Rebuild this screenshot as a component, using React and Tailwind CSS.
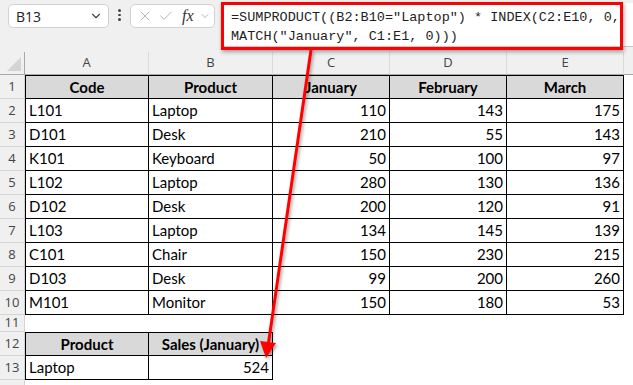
import { ChevronDown, X, Check } from 'lucide-react';

// widths of the sheet columns A..E
const colW = ['w-[124px]', 'w-[124px]', 'w-[117px]', 'w-[117px]', 'w-[117px]'];

const data = [
  ['L101', 'Laptop', 110, 143, 175],
  ['D101', 'Desk', 210, 55, 143],
  ['K101', 'Keyboard', 50, 100, 97],
  ['L102', 'Laptop', 280, 130, 136],
  ['D102', 'Desk', 200, 120, 91],
  ['L103', 'Laptop', 134, 145, 139],
  ['C101', 'Chair', 150, 230, 215],
  ['D103', 'Desk', 99, 200, 260],
  ['M101', 'Monitor', 150, 180, 53],
];

/**
 * One sheet row: row number + cells + empty white rest
 */
function Row({ num, h = 'h-[24px]', children }) {
  return (
    <div className={`flex ${h}`}>
      <div className="w-[25px] shrink-0 bg-[#f0f0f0] border-r border-b border-[#d4d4d4] flex items-center justify-center text-[13px] text-[#444] font-['Open_Sans',sans-serif]">
        {num}
      </div>
      {children}
      <div className="flex-1 bg-white" />
    </div>
  );
}

function Cell({ w, first, top, head, right, children }) {
  return (
    <div
      className={`${w} shrink-0 flex items-center border-r border-b border-black px-[3px] text-[15px] text-black overflow-hidden whitespace-nowrap
        ${first ? 'border-l' : ''} ${top ? 'border-t' : ''}
        ${head ? 'bg-[#d9d9d9] font-bold justify-center' : 'bg-white'}
        ${right ? 'justify-end' : ''}`}
    >
      {children}
    </div>
  );
}

export default function App() {
  return (
    <div className="relative w-[633px] h-[385px] overflow-hidden bg-[#f0f0f0] font-['Lato',sans-serif]">
      {/* Barre de formule */}
      <div className="h-[52px] flex items-start pl-[8px] pt-[3px]">
        <div className="mt-[1px] w-[101px] h-[24px] rounded-[5px] border border-[#d2d2d2] bg-white flex items-center justify-between pl-[7px] pr-[5px] font-['Open_Sans',sans-serif] text-[14px] text-[#222]">
          <span>B13</span>
          <ChevronDown className="w-[14px] h-[14px] text-[#444]" strokeWidth={2} />
        </div>
        <div className="mt-[6px] w-[21px] flex flex-col items-center gap-[2px]">
          <span className="w-[2.5px] h-[2.5px] rounded-full bg-[#444]" />
          <span className="w-[2.5px] h-[2.5px] rounded-full bg-[#444]" />
          <span className="w-[2.5px] h-[2.5px] rounded-full bg-[#444]" />
        </div>
        <div className="mt-[1px] w-[85px] h-[24px] rounded-[5px] border border-[#d2d2d2] bg-white flex items-center pl-[6px] gap-[5px]">
          <X className="w-[16px] h-[16px] text-[#b5b5b5]" strokeWidth={1.5} />
          <Check className="w-[16px] h-[16px] text-[#b5b5b5]" strokeWidth={1.5} />
          <span className="ml-[3px] font-['Liberation_Serif',serif] italic text-[16px] text-[#333] leading-none">fx</span>
          <ChevronDown className="w-[12px] h-[12px] text-[#999]" strokeWidth={1.5} />
        </div>
        <div className="relative ml-[6px] flex-1 h-[44px] bg-white border-b border-[#c6c6c6]">
          <div className="pl-[10px] pt-[5px] font-['Liberation_Mono',monospace] text-[13.5px] leading-[19px] text-[#1e1e1e] whitespace-pre">
            <div>=SUMPRODUCT((B2:B10="Laptop") * INDEX(C2:E10, 0,</div>
            <div>MATCH("January", C1:E1, 0)))</div>
          </div>
          <div className="absolute left-0 top-[-1px] right-[10px] bottom-[-4px] border-[3px] border-[#ff0000] shadow-[1px_2px_4px_rgba(0,0,0,0.35)]" />
        </div>
      </div>

      {/* En-têtes de colonnes */}
      <div className="flex h-[23px]">
        <div className="w-[25px] shrink-0 border-r border-b border-[#a8a8a8] flex items-end justify-end pr-[3px] pb-[3px]">
          <svg width="14" height="14" viewBox="0 0 14 14">
            <polygon points="14,0 14,14 0,14" fill="#d4d4d4" />
          </svg>
        </div>
        {['A', 'B', 'C', 'D', 'E'].map((l, i) => (
          <div
            key={l}
            className={`${colW[i]} shrink-0 border-r border-[#dadada] border-b border-b-[#a8a8a8] flex items-center justify-center text-[13px] text-[#444] font-['Open_Sans',sans-serif]`}
          >
            {l}
          </div>
        ))}
        <div className="flex-1 border-b border-[#a8a8a8]" />
      </div>

      {/* Tableau principal */}
      <Row num={1}>
        {['Code', 'Product', 'January', 'February', 'March'].map((t, i) => (
          <Cell key={t} w={colW[i]} first={i === 0} top head>
            {t}
          </Cell>
        ))}
      </Row>
      {data.map((r, ri) => (
        <Row key={ri} num={ri + 2}>
          {r.map((v, i) => (
            <Cell key={i} w={colW[i]} first={i === 0} right={i > 1}>
              {v}
            </Cell>
          ))}
        </Row>
      ))}
      <Row num={11} h="h-[17px]" />
      <Row num={12}>
        <Cell w={colW[0]} first top head>Product</Cell>
        <Cell w={colW[1]} top head>Sales (January)</Cell>
      </Row>
      <Row num={13}>
        <Cell w={colW[0]} first>Laptop</Cell>
        <Cell w={colW[1]} right>524</Cell>
      </Row>
      <Row />

      {/* Flèche d'annotation */}
      <svg className="absolute inset-0 pointer-events-none" width="633" height="385">
        <defs>
          <filter id="sh" x="-50%" y="-10%" width="200%" height="120%">
            <feDropShadow dx="1.5" dy="2" stdDeviation="1.5" floodColor="#000" floodOpacity="0.35" />
          </filter>
        </defs>
        <g filter="url(#sh)">
          <line x1="311" y1="50" x2="268.5" y2="343" stroke="#ff0000" strokeWidth="3" />
          <polygon points="266,358 260,341 276,343" fill="#ff0000" />
        </g>
      </svg>
    </div>
  );
}
